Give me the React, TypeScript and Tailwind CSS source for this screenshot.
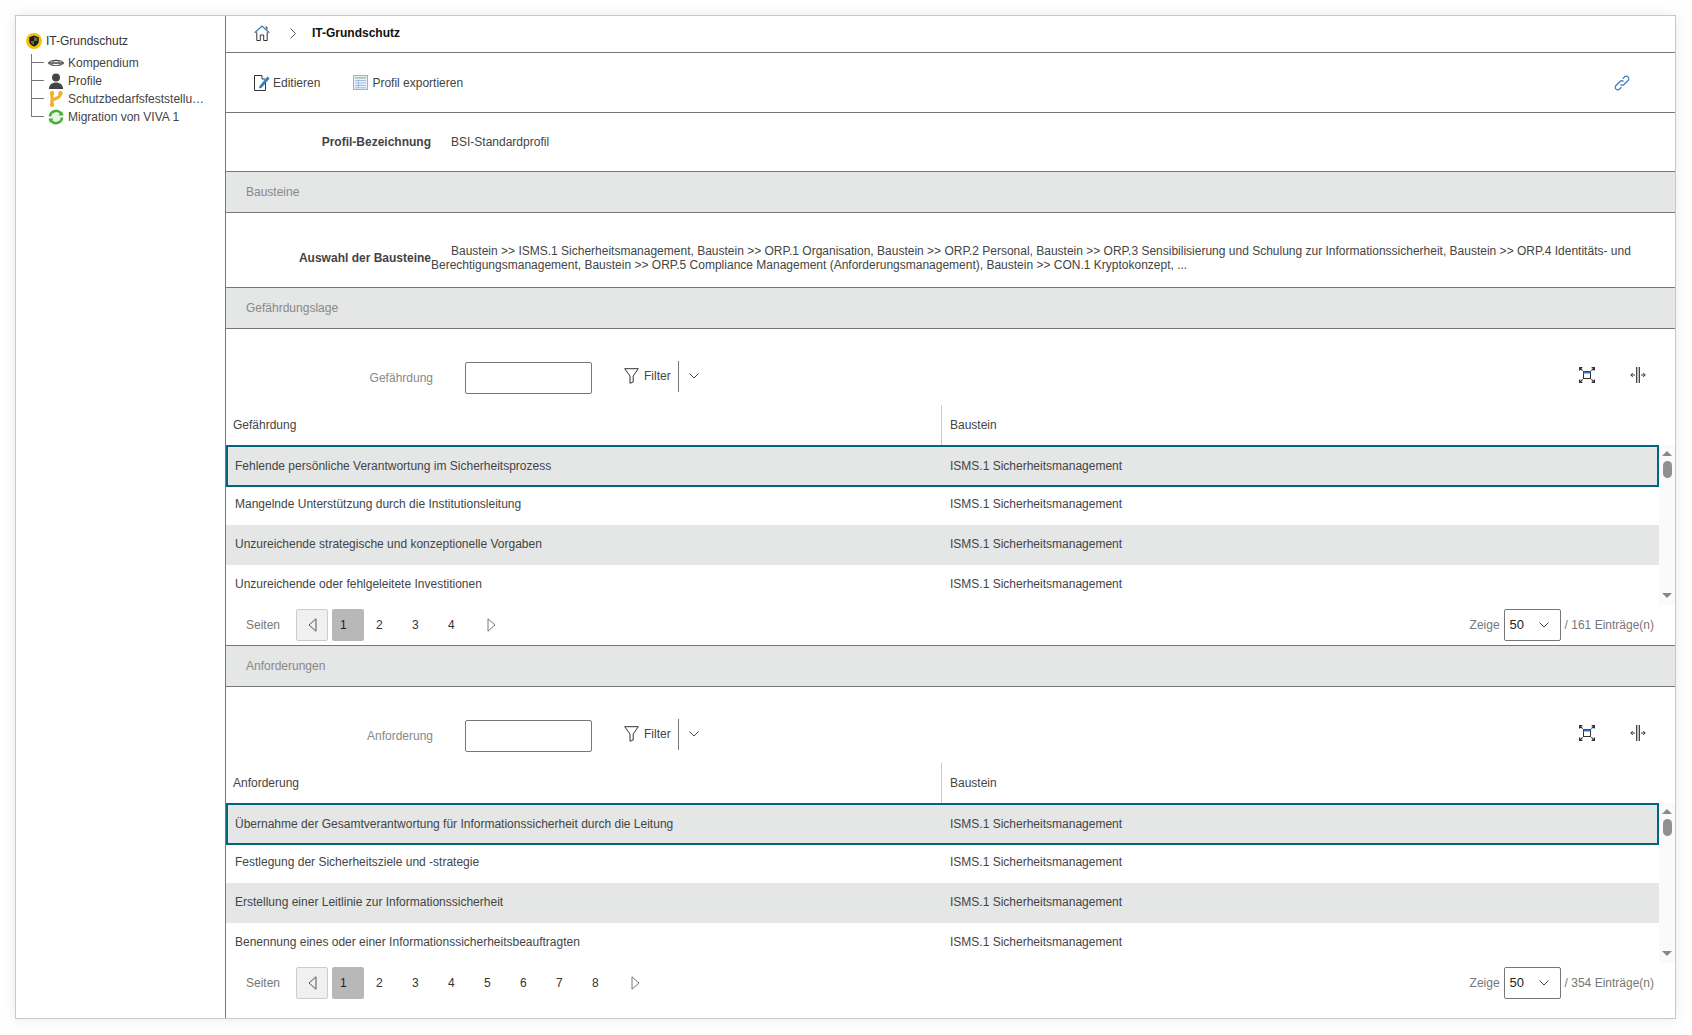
import React from 'react';

const ISMS = 'ISMS.1 Sicherheitsmanagement';

const AUSWAHL =
  'Baustein >> ISMS.1 Sicherheitsmanagement, Baustein >> ORP.1 Organisation, Baustein >> ORP.2 Personal, Baustein >> ORP.3 Sensibilisierung und Schulung zur Informationssicherheit, Baustein >> ORP.4 Identitäts- und Berechtigungsmanagement, Baustein >> ORP.5 Compliance Management (Anforderungsmanagement), Baustein >> CON.1 Kryptokonzept, ...';

const GEFAEHRDUNGEN = [
  'Fehlende persönliche Verantwortung im Sicherheitsprozess',
  'Mangelnde Unterstützung durch die Institutionsleitung',
  'Unzureichende strategische und konzeptionelle Vorgaben',
  'Unzureichende oder fehlgeleitete Investitionen',
];

const ANFORDERUNGEN = [
  'Übernahme der Gesamtverantwortung für Informationssicherheit durch die Leitung',
  'Festlegung der Sicherheitsziele und -strategie',
  'Erstellung einer Leitlinie zur Informationssicherheit',
  'Benennung eines oder einer Informationssicherheitsbeauftragten',
];

const ShieldIcon = () => (
  <svg width="16" height="16" viewBox="0 0 16 16">
    <circle cx="8" cy="8" r="8" fill="#f5c400" />
    <path d="M8 2.6 L12.8 4.2 V8 C12.8 10.8 10.4 12.6 8 13.6 C5.6 12.6 3.2 10.8 3.2 8 V4.2 Z" fill="#1c1c1c" />
    <path d="M8 4 L11.4 5.1 V8 H8 Z M8 8 V12 C6.4 11.2 4.6 10 4.6 8 Z" fill="#6b6b4a" />
  </svg>
);

const BookIcon = () => (
  <svg width="16" height="16" viewBox="0 0 16 16" fill="none">
    <ellipse cx="8" cy="8" rx="7.5" ry="2.6" stroke="#444" strokeWidth="1" />
    <path d="M1 8 H15 M4.5 6.2 C6 5 10 5 11.5 6.2" stroke="#444" strokeWidth="1.3" />
    <path d="M3 9.2 C6 11 10 11 13 9.2" stroke="#777" strokeWidth="1" />
  </svg>
);

const PersonIcon = () => (
  <svg width="16" height="16" viewBox="0 0 16 16" fill="#444">
    <circle cx="8" cy="4.4" r="4" />
    <path d="M0.8 16 C1.2 11.5 4 9.4 8 9.4 C12 9.4 14.8 11.5 15.2 16 Z" />
  </svg>
);

const BranchIcon = () => (
  <svg width="16" height="16" viewBox="0 0 16 16" fill="none" stroke="#efb02e">
    <path d="M4 2 V14" strokeWidth="3" />
    <path d="M4 10.5 C4 7 12.5 8.5 12.5 2.5" strokeWidth="3" />
    <circle cx="4" cy="2.2" r="2.2" fill="#efb02e" strokeWidth="0" />
    <circle cx="12.5" cy="2.2" r="2.2" fill="#efb02e" strokeWidth="0" />
    <circle cx="4" cy="13.8" r="2.2" fill="#efb02e" strokeWidth="0" />
  </svg>
);

const SyncIcon = () => (
  <svg width="16" height="16" viewBox="0 0 16 16" fill="none">
    <circle cx="8" cy="8" r="5.5" fill="#e9f6e6" />
    <path d="M2 7.5 A6 6 0 0 1 12.6 4" stroke="#45b035" strokeWidth="2.6" />
    <path d="M14 8.5 A6 6 0 0 1 3.4 12" stroke="#45b035" strokeWidth="2.6" />
    <path d="M15.5 6.6 L10.5 6.6 L14 2 Z" fill="#45b035" />
    <path d="M0.5 9.4 L5.5 9.4 L2 14 Z" fill="#45b035" />
  </svg>
);

const HomeIcon = () => (
  <svg width="16" height="16" viewBox="0 0 16 16" fill="none" strokeWidth="1">
    <path d="M0.7 7.8 L8 1 L15.3 7.8" stroke="#2f78bd" strokeWidth="1.2" />
    <path d="M2.8 7.2 V15.5 H6.3 V10 H9.7 V15.5 H13.2 V7.2" stroke="#333" />
    <path d="M11.5 2 H13 V4.5" stroke="#333" />
  </svg>
);

const EditIcon = () => (
  <svg width="16" height="16" viewBox="0 0 16 16" fill="none">
    <path d="M8 0.5 H0.5 V15.5 H11.5 V8" stroke="#333" />
    <path d="M8 0.5 V4 H11" stroke="#333" />
    <path d="M5.5 11 L13.4 1.6 L15.6 3.4 L7.7 12.8 L5 13.6 Z" fill="#2f7fc6" />
  </svg>
);

const TableIcon = () => (
  <svg width="15" height="15" viewBox="0 0 15 15" fill="none">
    <rect x="0.5" y="0.5" width="14" height="14" fill="#e6f0fa" stroke="#8db4de" />
    <path d="M2 2.8 H13" stroke="#9cc77c" strokeWidth="1.4" />
    <path d="M2 5.5 H13 M2 8 H13 M2 10.5 H13 M2 12.8 H13 M5.5 5 V13" stroke="#8fb2da" strokeWidth="0.8" />
  </svg>
);

const LinkIcon = () => (
  <svg width="16" height="16" viewBox="0 0 16 16" fill="none" stroke="#2f78bd" strokeWidth="1.1">
    <path d="M6.5 9.5 C7.6 10.6 9 10.5 10 9.5 L14 5.5 C15.1 4.4 15.1 2.9 14 1.9 C13 0.9 11.5 0.9 10.4 2 L8.6 3.8" />
    <path d="M9.5 6.5 C8.4 5.4 7 5.5 6 6.5 L2 10.5 C0.9 11.6 0.9 13.1 2 14.1 C3 15.1 4.5 15.1 5.6 14 L7.4 12.2" />
  </svg>
);

const FunnelIcon = () => (
  <svg width="15" height="16" viewBox="0 0 15 16" fill="none" stroke="#333">
    <path d="M0.7 0.7 H14.3 L9.2 8 V14 L6 15.3 V8 Z" />
  </svg>
);

const Chevron = () => (
  <svg width="10" height="6" viewBox="0 0 10 6" fill="none" stroke="#444">
    <path d="M0.5 0.5 L5 5 L9.5 0.5" />
  </svg>
);

const FitIcon = () => (
  <svg width="16" height="16" viewBox="0 0 16 16" fill="none" stroke="#333" strokeWidth="1.2">
    <path d="M0.6 3.4 V0.6 H3.4 M0.6 0.6 L3.6 3.6 M12.6 0.6 H15.4 V3.4 M15.4 0.6 L12.4 3.6 M0.6 12.6 V15.4 H3.4 M0.6 15.4 L3.6 12.4 M15.4 12.6 V15.4 H12.6 M15.4 15.4 L12.4 12.4" />
    <rect x="4.5" y="4.5" width="7" height="7" strokeWidth="1" />
    <path d="M4.5 5.5 H11.5" stroke="#2f78bd" strokeWidth="2" />
  </svg>
);

const ColumnsIcon = () => (
  <svg width="16" height="16" viewBox="0 0 16 16" fill="none" stroke="#333">
    <path d="M6.7 0 V16 M9.3 0 V16" strokeWidth="1.2" />
    <path d="M5 8 H0.8 M2.8 6 L0.8 8 L2.8 10 M11 8 H15.2 M13.2 6 L15.2 8 L13.2 10" />
  </svg>
);

const TreeRow = ({ icon, label, last }: { icon: React.ReactNode; label: string; last?: boolean }) => (
  <div className="flex h-[18px] items-center">
    <div className="w-[13px] h-full flex flex-col">
      <div className="h-[9px] border-l border-b border-[#777]" />
      {!last && <div className="h-[9px] border-l border-[#777]" />}
      {last && <div className="h-[9px]" />}
    </div>
    <div className="ml-[4px] w-[16px] h-[16px] shrink-0">{icon}</div>
    <span className="ml-[4px] whitespace-nowrap">{label}</span>
  </div>
);

const Band = ({ title }: { title: string }) => (
  <div className="h-[42px] flex items-center pl-[20px] bg-[#e5e6e6] border-y border-[#777] text-[#888]">{title}</div>
);

const Pager = ({ pages, total }: { pages: number; total: number }) => (
  <div className="h-[40px] flex items-center pr-[21px]">
    <span className="ml-[20px] w-[50px] text-[#777]">Seiten</span>
    <button className="w-[32px] h-[32px] flex items-center justify-center rounded-[2px] bg-[#f0f0f0] border border-[#ccc]">
      <svg width="9" height="14" viewBox="0 0 9 14" fill="none" stroke="#555">
        <path d="M8 0.8 L1 7 L8 13.2 Z" />
      </svg>
    </button>
    <div className="flex gap-[4px] ml-[4px]">
      {Array.from({ length: pages }, (_, i) => (
        <span
          key={i}
          className={
            i === 0
              ? 'w-[32px] h-[32px] flex items-center pl-[8px] rounded-[2px] bg-[#b8b8b8] text-[#222]'
              : 'w-[32px] h-[32px] flex items-center pl-[8px] text-[#333]'
          }
        >
          {i + 1}
        </span>
      ))}
      <span className="w-[32px] h-[32px] flex items-center justify-center pr-[2px]">
        <svg width="9" height="14" viewBox="0 0 9 14" fill="none" stroke="#777">
          <path d="M1 0.8 L8 7 L1 13.2 Z" />
        </svg>
      </span>
    </div>
    <span className="ml-auto text-[#777]">Zeige</span>
    <div className="ml-[4px] w-[57px] h-[32px] flex items-center justify-between pl-[5px] pr-[11px] rounded-[2px] bg-white border border-[#777] text-[13px] text-[#222]">
      50
      <Chevron />
    </div>
    <span className="ml-[4px] text-[#777]">/ {total} Einträge(n)</span>
  </div>
);

const DataTable = ({ column, filterLabel, rows, pages, total }: { column: string; filterLabel: string; rows: string[]; pages: number; total: number }) => (
  <div>
    <div className="h-[76px] flex pr-[29px] pt-[33px]">
      <div className="w-[207px] h-[32px] flex items-center justify-end text-[#888]">{filterLabel}</div>
      <div className="ml-[32px] w-[127px] h-[32px] bg-white border border-[#777] rounded-[2px]" />
      <div className="ml-[32px] h-[32px] flex items-center -translate-y-[2px]">
        <FunnelIcon />
        <span className="ml-[5px] text-[#444]">Filter</span>
        <div className="ml-[7px] w-px h-[31px] bg-[#777]" />
        <div className="ml-[10px]">
          <Chevron />
        </div>
      </div>
      <div className="ml-auto h-[32px] flex items-center gap-[35px] -translate-y-[3px]">
        <FitIcon />
        <ColumnsIcon />
      </div>
    </div>
    <div className="h-[40px] flex pr-[16px] text-[#444]">
      <div className="w-[716px] flex items-center pl-[7px] border-r border-[#ccc]">{column}</div>
      <div className="flex items-center pl-[8px]">Baustein</div>
    </div>
    <div className="flex">
      <div className="flex-1 min-w-0 text-[#444]">
        {rows.map((row, i) => (
          <div
            key={row}
            className={
              i === 0
                ? 'h-[42px] flex items-center bg-[#e5e6e6] border-2 border-[#04657f] pl-[7px]'
                : i === 1
                  ? 'h-[38px] flex items-center pl-[9px] pb-[5px]'
                  : i === 2
                    ? 'h-[40px] flex items-center pl-[9px] pb-[2px] bg-[#e5e6e6]'
                    : 'h-[40px] flex items-center pl-[9px] pb-[2px]'
            }
          >
            <span className="w-[715px] shrink-0">{row}</span>
            <span>{ISMS}</span>
          </div>
        ))}
      </div>
      <div className="w-[16px] shrink-0 bg-[#fafafa] flex flex-col items-center pt-[6px] pb-[7px]">
        <div className="w-0 h-0 border-x-[5px] border-x-transparent border-b-[5px] border-b-[#888]" />
        <div className="mt-[5px] w-[9px] h-[17px] rounded-full bg-[#909090]" />
        <div className="mt-auto w-0 h-0 border-x-[5px] border-x-transparent border-t-[5px] border-t-[#888]" />
      </div>
    </div>
    <Pager pages={pages} total={total} />
  </div>
);

export default function App() {
  return (
    <div className="h-[1035px] pt-[15px] pl-[15px] pr-[16px] pb-[16px] bg-[#fefefe] text-[12px] leading-[14px] text-[#444] font-['Liberation_Sans',Arial,sans-serif]">
      <div className="h-full flex bg-white border border-[#c8c8c8] shadow-[0_0_12px_rgba(0,0,0,0.08)]">
        <aside className="w-[210px] shrink-0 pl-[10px] pt-[17px] border-r border-[#777]">
          <div className="flex h-[16px] items-center text-[#333]">
            <ShieldIcon />
            <span className="ml-[4px]">IT-Grundschutz</span>
          </div>
          <div className="ml-[5px] mt-[5px]">
            <TreeRow icon={<BookIcon />} label="Kompendium" />
            <TreeRow icon={<PersonIcon />} label="Profile" />
            <TreeRow icon={<BranchIcon />} label="Schutzbedarfsfeststellu…" />
            <TreeRow icon={<SyncIcon />} label="Migration von VIVA 1" last />
          </div>
        </aside>

        <main className="flex-1 min-w-0">
          <div className="h-[37px] flex items-center pl-[28px] pb-[2px] border-b border-[#777]">
            <HomeIcon />
            <svg className="ml-[20px]" width="6" height="11" viewBox="0 0 6 11" fill="none" stroke="#555">
              <path d="M0.5 0.5 L5.5 5.5 L0.5 10.5" />
            </svg>
            <span className="ml-[16px] font-bold text-[#111]">IT-Grundschutz</span>
          </div>

          <div className="h-[60px] flex items-center pl-[28px] pr-[45px] border-b border-[#777]">
            <EditIcon />
            <span className="ml-[3px]">Editieren</span>
            <span className="ml-[33px]">
              <TableIcon />
            </span>
            <span className="ml-[4px]">Profil exportieren</span>
            <span className="ml-auto">
              <LinkIcon />
            </span>
          </div>

          <div className="h-[58px] flex items-center">
            <span className="w-[205px] text-right font-bold">Profil-Bezeichnung</span>
            <span className="ml-[20px]">BSI-Standardprofil</span>
          </div>

          <Band title="Bausteine" />

          <div className="h-[74px] flex pr-[42px] pt-[31px]">
            <span className="w-[205px] shrink-0 mt-[7px] text-right font-bold">Auswahl der Bausteine</span>
            <p className="indent-[20px]">{AUSWAHL}</p>
          </div>

          <Band title="Gefährdungslage" />
          <DataTable column="Gefährdung" filterLabel="Gefährdung" rows={GEFAEHRDUNGEN} pages={4} total={161} />

          <Band title="Anforderungen" />
          <DataTable column="Anforderung" filterLabel="Anforderung" rows={ANFORDERUNGEN} pages={8} total={354} />
        </main>
      </div>
    </div>
  );
}
